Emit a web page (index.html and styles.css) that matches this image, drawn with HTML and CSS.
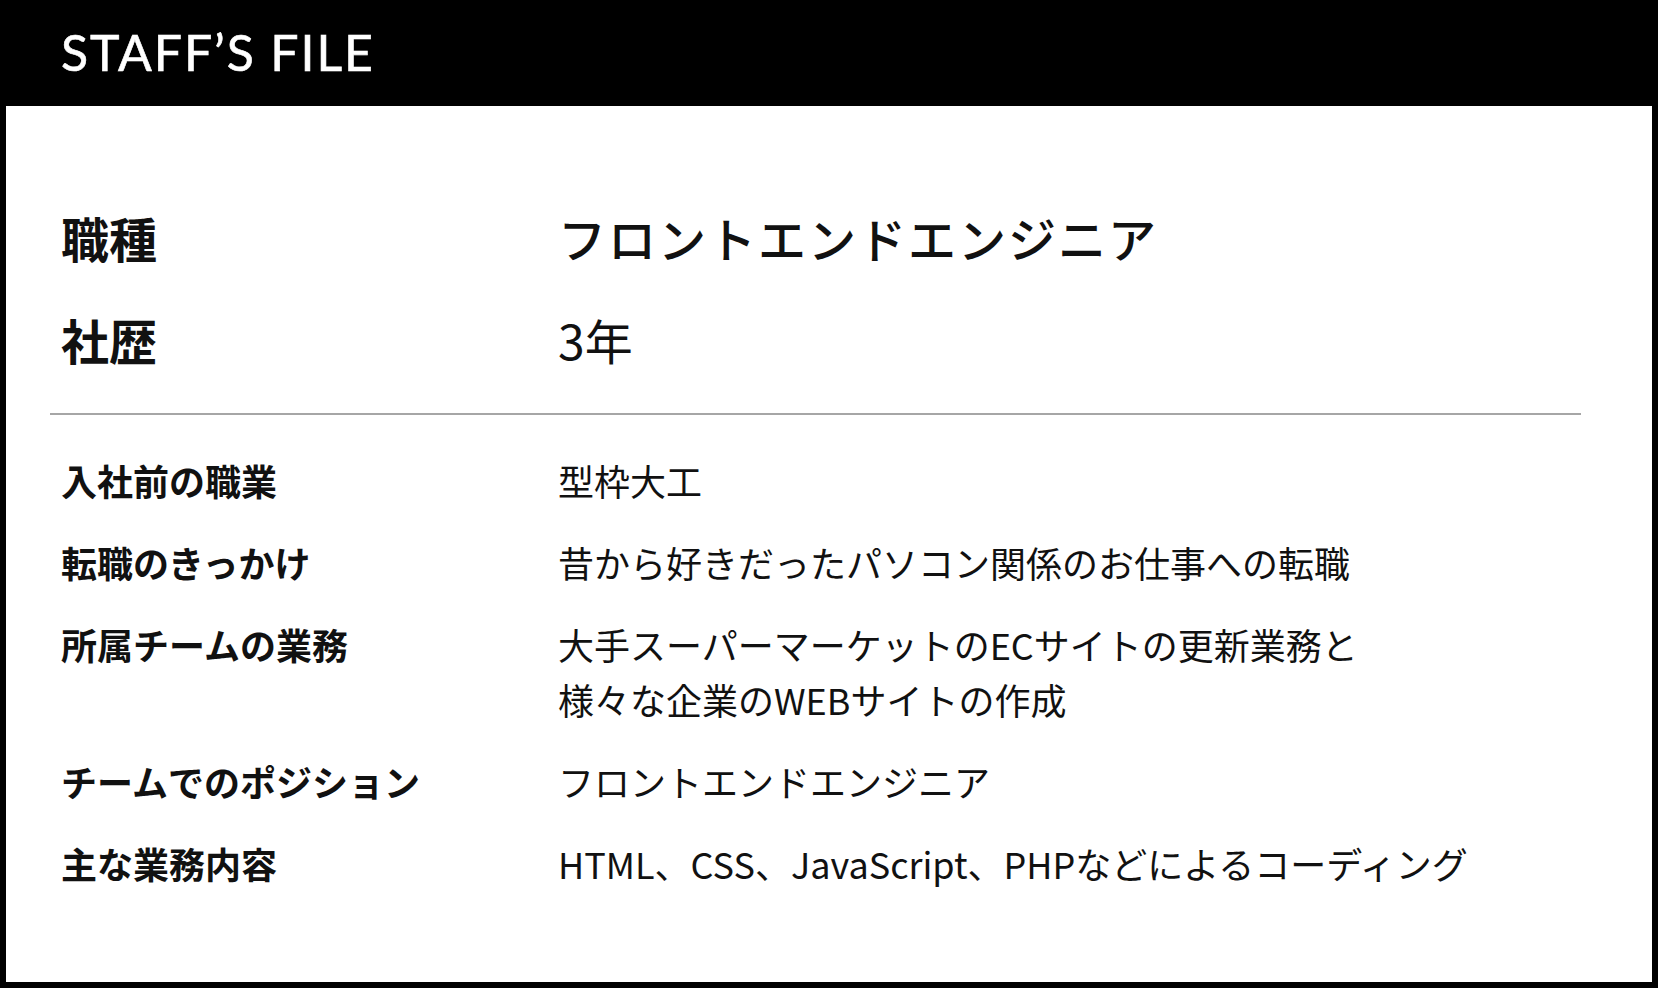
FILE: index.html
```html
<!DOCTYPE html>
<html lang="ja">
<head>
<meta charset="utf-8">
<title>STAFF'S FILE</title>
<link rel="stylesheet" href="styles.css">
</head>
<body>
<div class="frame">
  <header class="head">
    <h1 class="title">STAFF’S FILE</h1>
  </header>
  <main class="panel">
    <dl class="main-list">
      <div class="row big">
        <dt>職種</dt>
        <dd class="kata">フロントエンドエンジニア</dd>
      </div>
      <div class="row big">
        <dt>社歴</dt>
        <dd class="years">3年</dd>
      </div>
    </dl>
    <hr class="sep">
    <dl class="sub-list">
      <div class="row small">
        <dt>入社前の職業</dt>
        <dd>型枠大工</dd>
      </div>
      <div class="row small">
        <dt>転職のきっかけ</dt>
        <dd>昔から好きだったパソコン関係のお仕事への転職</dd>
      </div>
      <div class="row small">
        <dt>所属チームの業務</dt>
        <dd>大手スーパーマーケットのECサイトの更新業務と<br>様々な企業のWEBサイトの作成</dd>
      </div>
      <div class="row small">
        <dt>チームでのポジション</dt>
        <dd>フロントエンドエンジニア</dd>
      </div>
      <div class="row small">
        <dt>主な業務内容</dt>
        <dd>HTML、CSS、JavaScript、PHPなどによるコーディング</dd>
      </div>
    </dl>
  </main>
</div>
</body>
</html>
```
FILE: styles.css
```css
* { box-sizing: border-box; }
html, body {
  margin: 0;
  padding: 0;
  background: #000;
}
body {
  font-family: "Noto Sans CJK JP", "Noto Sans", sans-serif;
  color: #111;
}
.frame {
  width: 1658px;
  height: 988px;
  display: flex;
  flex-direction: column;
  padding: 0 6px 6px;
}
.head {
  height: 106px;
  display: flex;
  align-items: center;
  padding-left: 55px;
}
.title {
  margin: 0;
  color: #fff;
  font-family: "Lato", "Liberation Sans", sans-serif;
  font-weight: 400;
  font-size: 50px;
  letter-spacing: 1.9px;
  line-height: 1;
  padding-bottom: 2px;
  -webkit-text-stroke: 0.6px #fff;
}
.panel {
  flex: 1;
  background: #fff;
  padding: 95px 71px 0 44px;
}
dl { margin: 0; }
dd { margin: 0; }
.main-list, .sub-list {
  padding-left: 11px;
}
.row {
  display: grid;
  grid-template-columns: 497px 1fr;
}
.big {
  font-size: 48px;
  line-height: 72px;
  margin-bottom: 30px;
}
.big:last-child { margin-bottom: 0; }
.big dt { font-weight: 700; }
.big dd { font-weight: 500; }
.big dd.kata { letter-spacing: 2px; }
.big dd.years { font-weight: 400; }
.main-list { padding-bottom: 3px; }
.sep {
  margin: 35px 0 0;
  border: 0;
  border-top: 2px solid #a6a6a6;
  height: 0;
}
.sub-list { padding-top: 38px; }
.small {
  font-size: 36px;
  line-height: 55px;
  margin-bottom: 27px;
}
.small:last-child { margin-bottom: 0; }
.small dt { font-weight: 700; }
.small dd { font-weight: 400; }
```
